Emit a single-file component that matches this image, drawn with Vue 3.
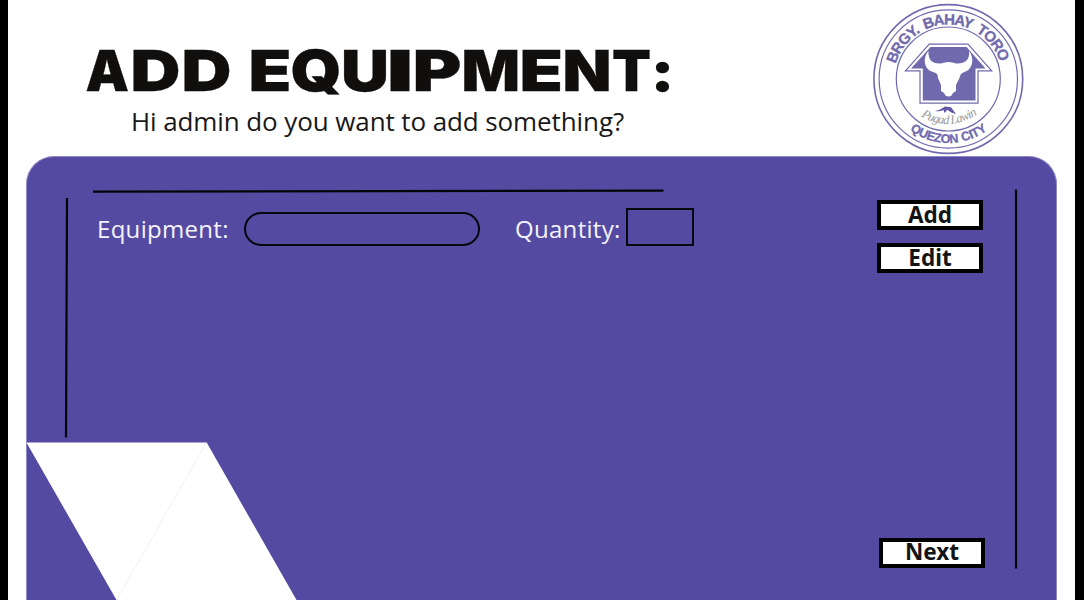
<script setup>
// Each glyph of the display title: character, left edge, advance width.
const glyphs = [
  ['A', 85.5, 43.5], ['D', 130.5, 50], ['D', 181.5, 50], [' ', 231.5, 16],
  ['E', 248.5, 43], ['Q', 290.5, 51], ['U', 341, 48], ['I', 386.5, 27],
  ['P', 412.5, 49], ['M', 461.5, 58.5], ['E', 519.5, 43.5], ['N', 562.5, 49],
  ['T', 612, 39], [':', 650.5, 24]
]
const actions = ['Add', 'Edit']
</script>

<template>
  <main class="page">
    <header class="header">
      <div class="heading">
        <h1 class="title">
          <svg width="700" height="60" viewBox="0 41 700 60">
            <text y="91"><tspan v-for="(g, i) in glyphs" :key="i" :x="g[1]" :textLength="g[2]" lengthAdjust="spacingAndGlyphs">{{ g[0] }}</tspan></text>
          </svg>
        </h1>
        <p class="subtitle">Hi admin do you want to add something?</p>
      </div>
      <svg class="seal" width="152" height="152" viewBox="872 3 152 152">
        <defs>
          <path id="arc-top" d="M893.8 79a54.5 54.5 0 0 1 109 0" />
          <path id="arc-bottom" d="M884.5 79a64 64 0 0 0 128 0" />
          <path id="arc-script" d="M921 116Q948 133 978 114" />
        </defs>
        <g fill="none" stroke="#7169ad">
          <circle cx="948.3" cy="79" r="74.4" stroke-width="1.6" />
          <circle cx="948.3" cy="79" r="69.2" stroke-width="1.2" />
          <circle cx="948.3" cy="79" r="52" stroke-width="1.2" />
          <path d="M929.2 44.2H968L991.7 70.8H978V103.2H920V70.8H905.5Z" stroke-width="1.2" />
        </g>
        <path d="M930.5 47H966.5L985.5 68.5H975.5V100.5H922.8V68.5H911Z" fill="#7169ad" />
        <path d="M928.5 51C923 57 923 69 933 72C937 73 938 75 938 78L941 85V91L944 93L945.5 95.5Q948.5 97.5 951.5 95.5L953 93L956 91V85L959.5 78C960 75 961 73 964.5 72C974 69 974 57 969 51C970 60 965 64 956 63.5Q948.5 60.5 941 63.5C932 64 928 60 928.5 51Z" fill="#fff" />
        <path d="M935 111Q939 110.5 945 106.5L951 107.3L956 114Q950 112.5 947.5 109.8L944.5 113L943.5 110Q939 112 935 111Z" fill="#6259a5" />
        <text class="seal-top" textLength="139"><textPath href="#arc-top" startOffset="15">BRGY. BAHAY TORO</textPath></text>
        <text class="seal-bottom" textLength="83"><textPath href="#arc-bottom" startOffset="59">QUEZON CITY</textPath></text>
        <text class="seal-script" textLength="60"><textPath href="#arc-script" startOffset="0">Pugad Lawin</textPath></text>
      </svg>
    </header>

    <section class="panel">
      <svg class="lines" width="1030" height="443" viewBox="27 157 1030 443">
        <g stroke="#050507" stroke-width="2.2">
          <path d="M93 191.7L663.5 190.7" />
          <path d="M67 198L66 437.5" />
          <path d="M1016 189.5V568.5" />
        </g>
        <path d="M26.5 442.6H206.7L296.5 600H116.5Z" fill="#fff" />
        <path d="M206.3 443L116.5 600" stroke="#ededed" stroke-width=".8" />
      </svg>
      <form class="form" @submit.prevent>
        <label class="label" for="equipment">Equipment:</label>
        <input id="equipment" class="input equipment" type="text" />
        <label class="label quantity-label" for="quantity">Quantity:</label>
        <input id="quantity" class="input quantity" type="text" />
      </form>
      <aside class="actions">
        <button v-for="name in actions" :key="name" type="button" class="btn">{{ name }}</button>
        <button type="button" class="btn next">Next</button>
      </aside>
    </section>
  </main>
</template>

<style>
body { overflow: hidden; }
</style>

<style scoped>
.page {
  box-sizing: border-box;
  display: flex;
  flex-direction: column;
  width: 1084px;
  height: 600px;
  overflow: hidden;
  background: #fff;
  border-left: 8px solid #000;
  border-right: 9px solid #000;
  font-family: "Open Sans", "Noto Sans", sans-serif;
}
.header {
  flex: none;
  display: flex;
  height: 156px;
}
.heading {
  width: 864px;
  padding-top: 41px;
  box-sizing: border-box;
}
.title {
  height: 60px;
  margin: 0 0 0 -8px;
}
.title svg { overflow: visible; }
.title text {
  font: 900 56px Inter, sans-serif;
  fill: #100f0d;
  stroke: #100f0d;
  stroke-width: .3px;
  white-space: pre;
}
.subtitle {
  margin: 2px 0 0 123px;
  font-size: 26px;
  line-height: 36px;
  letter-spacing: -.1px;
  white-space: nowrap;
  color: #191919;
}
.seal { margin-top: 3px; }
.seal-top, .seal-bottom {
  font-family: "Liberation Sans", Arial, sans-serif;
  font-weight: 700;
  fill: #7169ad;
  stroke: #7169ad;
  stroke-width: .3px;
}
.seal-top {
  font-size: 15px;
  word-spacing: 3px;
}
.seal-bottom {
  font-size: 12.5px;
  word-spacing: 1px;
}
.seal-script {
  font: italic 12.5px "Liberation Serif", serif;
  fill: #999;
}
.panel {
  position: relative;
  box-sizing: border-box;
  flex: 1;
  display: flex;
  justify-content: space-between;
  margin: 0 18px;
  background: #554aa2;
  border: 1px solid #9088c4;
  border-bottom: 0;
  border-radius: 28px 28px 0 0;
  overflow: hidden;
}
.lines {
  position: absolute;
  top: 0;
  left: 0;
  pointer-events: none;
}
.form {
  position: relative;
  display: flex;
  align-items: flex-start;
  height: 40px;
  margin: 51px 0 0 70px;
}
.label {
  width: 147px;
  margin-top: 4px;
  font-size: 24px;
  line-height: 34px;
  letter-spacing: .3px;
  white-space: nowrap;
  color: #f4f2fa;
}
.quantity-label { width: 111px; }
.input {
  box-sizing: border-box;
  padding: 0 10px;
  border: 2px solid #08070d;
  background: transparent;
  outline: none;
}
.equipment {
  width: 236px;
  height: 34px;
  margin: 4px 35px 0 0;
  border-radius: 17px;
}
.quantity {
  width: 68px;
  height: 38px;
  border-radius: 0;
}
.actions {
  position: relative;
  display: flex;
  flex-direction: column;
  gap: 13px;
  padding: 43px 73px 32px 0;
}
.btn {
  box-sizing: border-box;
  flex: none;
  display: flex;
  align-items: center;
  justify-content: center;
  width: 106px;
  height: 30px;
  padding: 0;
  border: 4px solid #000;
  border-radius: 0;
  background: #fff;
  color: #141414;
  font: 700 22.5px/22px "Noto Sans", sans-serif;
}
.next {
  margin-top: auto;
  padding-bottom: 3px;
  transform: translateX(2px);
}
</style>
